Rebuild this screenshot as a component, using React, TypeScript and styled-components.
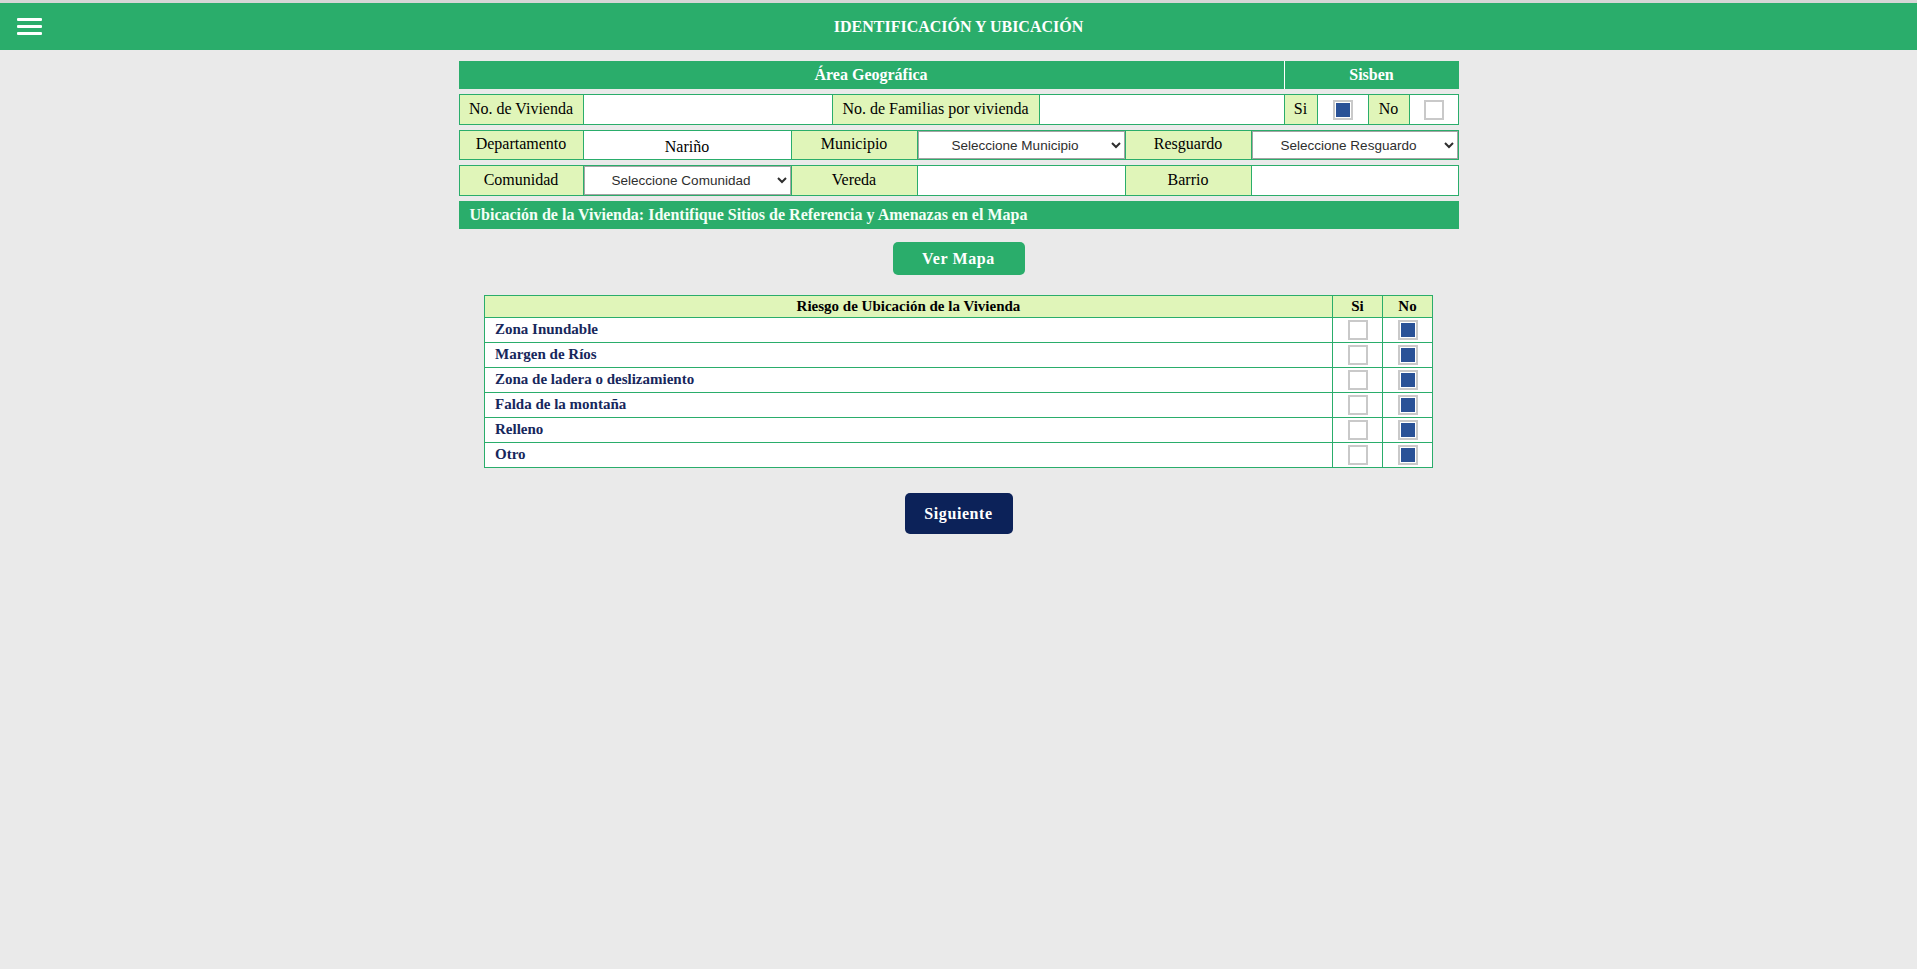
import React from "react";
import styled, { createGlobalStyle } from "styled-components";

const GlobalStyle = createGlobalStyle`
  html, body {
    margin: 0;
    padding: 0;
    background: #eaeaea;
    font-family: "Liberation Serif", "Times New Roman", serif;
  }
  * { box-sizing: border-box; }
`;

const GREEN = "#2aad6b";
const LIME = "#e0f5b9";
const NAVY = "#0c2259";

const Header = styled.header`
  display: grid;
  grid-template-columns: 1fr auto 1fr;
  align-items: center;
  height: 50px;
  border-top: 3px solid #d6d6d6;
  background: ${GREEN};
`;

const Burger = styled.button`
  display: flex;
  flex-direction: column;
  gap: 4.5px;
  width: 25px;
  margin-left: 17px;
  padding: 0;
  border: none;
  background: transparent;
  cursor: pointer;
  justify-self: start;
`;

const BurgerBar = styled.span`
  display: block;
  width: 25px;
  height: 2.6px;
  background: #ffffff;
  border-radius: 1px;
`;

const Title = styled.h1`
  margin: 0;
  font-size: 16px;
  font-weight: bold;
  color: #ffffff;
  text-transform: uppercase;
`;

const Main = styled.main`
  width: 1000px;
  margin: 11px auto 0;
  display: flex;
  flex-direction: column;
  gap: 5px;
`;

const SectionHead = styled.div`
  display: grid;
  grid-template-columns: 825px 1fr;
  gap: 1px;
  background: #ffffff;
  height: 28px;
`;

const HeadCell = styled.div<{ $align?: string }>`
  display: flex;
  align-items: center;
  justify-content: ${(p) => p.$align ?? "center"};
  padding: 0 11px;
  background: ${GREEN};
  color: #ffffff;
  font-weight: bold;
  font-size: 16px;
`;

const Bar = styled.div`
  display: flex;
  align-items: center;
  height: 28px;
  padding: 0 11px;
  background: ${GREEN};
  color: #f4fff6;
  font-weight: bold;
  font-size: 16px;
`;

const FormRow = styled.div<{ $cols: string; $h: number }>`
  display: grid;
  grid-template-columns: ${(p) => p.$cols};
  grid-auto-rows: ${(p) => p.$h}px;
  gap: 1px;
  border: 1px solid ${GREEN};
  background: ${GREEN};
`;

const Label = styled.div`
  display: flex;
  align-items: center;
  justify-content: center;
  padding-bottom: 2px;
  background: ${LIME};
  font-size: 16px;
  color: #000;
  white-space: nowrap;
`;

const ValueCell = styled.div`
  display: flex;
  align-items: center;
  justify-content: center;
  padding-top: 3px;
  background: #ffffff;
  font-size: 16px;
  color: #000;
`;

const InputCell = styled.div`
  display: flex;
  background: #ffffff;
`;

const TextInput = styled.input`
  width: 100%;
  height: 100%;
  border: none;
  outline: none;
  background: #ffffff;
  font-family: "Liberation Serif", serif;
  font-size: 16px;
  padding: 0 6px;
`;

const Select = styled.select`
  width: 100%;
  height: 100%;
  border: 1px solid #a4a4a4;
  border-radius: 0;
  background: #ffffff;
  color: #2e2e2e;
  font-family: "Liberation Sans", Arial, sans-serif;
  font-size: 13.5px;
  text-align: center;
  text-align-last: center;
  padding: 0 4px;
  outline: none;
`;

const CheckCell = styled.div`
  display: flex;
  align-items: center;
  justify-content: center;
  background: #ffffff;
`;

const Check = styled.input.attrs({ type: "checkbox" })`
  appearance: none;
  -webkit-appearance: none;
  margin: 0;
  width: 20px;
  height: 20px;
  border: 2px solid #c9c9c9;
  background: #ffffff;
  cursor: pointer;
  &:checked {
    background: #2a5297;
    box-shadow: inset 0 0 0 1px #ffffff;
  }
`;

const ButtonRow = styled.div<{ $top: number }>`
  display: flex;
  justify-content: center;
  margin-top: ${(p) => p.$top}px;
`;

const ActionButton = styled.button<{ $bg: string; $w: number; $h: number }>`
  width: ${(p) => p.$w}px;
  height: ${(p) => p.$h}px;
  border: none;
  border-radius: 5px;
  background: ${(p) => p.$bg};
  color: #ffffff;
  font-family: "Liberation Serif", serif;
  font-weight: bold;
  font-size: 16px;
  letter-spacing: 0.6px;
  cursor: pointer;
`;

const RiskTable = styled.div`
  width: 949px;
  margin: 20px auto 0;
  display: grid;
  grid-template-columns: 1fr 49px 49px;
  grid-template-rows: 21px;
  grid-auto-rows: 24px;
  gap: 1px;
  border: 1px solid ${GREEN};
  background: ${GREEN};
`;

const RiskHead = styled.div`
  display: flex;
  align-items: center;
  justify-content: center;
  background: ${LIME};
  font-weight: bold;
  font-size: 15px;
  color: #000;
`;

const RiskLabel = styled.div`
  display: flex;
  align-items: center;
  padding: 0 10px 1px;
  background: #ffffff;
  font-weight: bold;
  font-size: 15px;
  color: #17275c;
`;

const risks = [
  "Zona Inundable",
  "Margen de Ríos",
  "Zona de ladera o deslizamiento",
  "Falda de la montaña",
  "Relleno",
  "Otro",
];

export default function App() {
  return (
    <>
      <GlobalStyle />
      <Header>
        <Burger aria-label="Menú">
          <BurgerBar />
          <BurgerBar />
          <BurgerBar />
        </Burger>
        <Title>Identificación y Ubicación</Title>
        <div />
      </Header>

      <Main>
        <SectionHead>
          <HeadCell>Área Geográfica</HeadCell>
          <HeadCell>Sisben</HeadCell>
        </SectionHead>

        <FormRow $cols="123px 248px 206px 244px 32px 50px 40px 1fr" $h={29}>
          <Label>No. de Vivienda</Label>
          <InputCell>
            <TextInput />
          </InputCell>
          <Label>No. de Familias por vivienda</Label>
          <InputCell>
            <TextInput />
          </InputCell>
          <Label>Si</Label>
          <CheckCell>
            <Check defaultChecked />
          </CheckCell>
          <Label>No</Label>
          <CheckCell>
            <Check />
          </CheckCell>
        </FormRow>

        <FormRow $cols="123px 207px 125px 207px 125px 1fr" $h={28}>
          <Label>Departamento</Label>
          <ValueCell>Nariño</ValueCell>
          <Label>Municipio</Label>
          <Select defaultValue="">
            <option value="">Seleccione Municipio</option>
          </Select>
          <Label>Resguardo</Label>
          <Select defaultValue="">
            <option value="">Seleccione Resguardo</option>
          </Select>
        </FormRow>

        <FormRow $cols="123px 207px 125px 207px 125px 1fr" $h={29}>
          <Label>Comunidad</Label>
          <Select defaultValue="">
            <option value="">Seleccione Comunidad</option>
          </Select>
          <Label>Vereda</Label>
          <InputCell>
            <TextInput />
          </InputCell>
          <Label>Barrio</Label>
          <InputCell>
            <TextInput />
          </InputCell>
        </FormRow>

        <Bar>
          Ubicación de la Vivienda: Identifique Sitios de Referencia y Amenazas en el Mapa
        </Bar>
      </Main>

      <ButtonRow $top={13}>
        <ActionButton $bg={GREEN} $w={132} $h={33}>
          Ver Mapa
        </ActionButton>
      </ButtonRow>

      <RiskTable>
        <RiskHead>Riesgo de Ubicación de la Vivienda</RiskHead>
        <RiskHead>Si</RiskHead>
        <RiskHead>No</RiskHead>
        {risks.map((r) => (
          <React.Fragment key={r}>
            <RiskLabel>{r}</RiskLabel>
            <CheckCell>
              <Check />
            </CheckCell>
            <CheckCell>
              <Check defaultChecked />
            </CheckCell>
          </React.Fragment>
        ))}
      </RiskTable>

      <ButtonRow $top={25}>
        <ActionButton $bg={NAVY} $w={108} $h={41}>
          Siguiente
        </ActionButton>
      </ButtonRow>
    </>
  );
}
